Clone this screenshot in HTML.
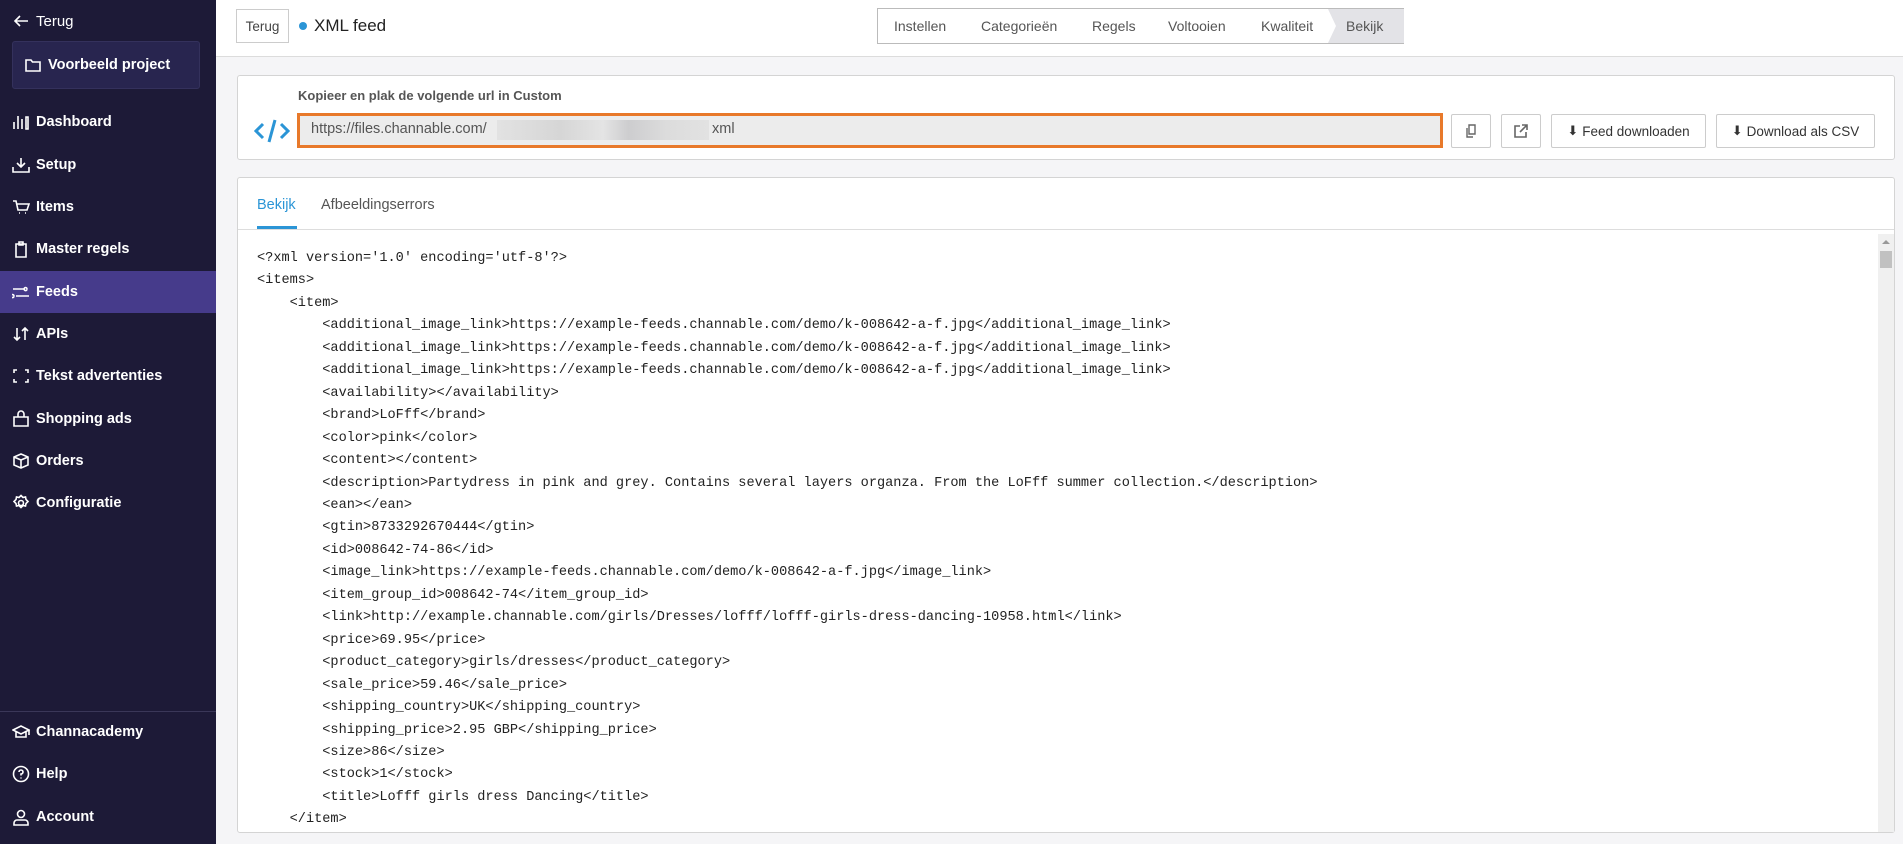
<!DOCTYPE html>
<html><head><meta charset="utf-8"><style>
*{box-sizing:border-box;margin:0;padding:0}
body{width:1903px;height:844px;overflow:hidden;background:#f5f5f7;font-family:"Liberation Sans",sans-serif;position:relative}
#sb{position:absolute;left:0;top:0;width:216px;height:844px;background:#1d1a37;color:#fff}
.ni{position:absolute;left:0;width:216px;height:42px;display:flex;align-items:center;font-size:14.5px;font-weight:bold;color:#fff}
.ni svg{position:absolute;left:12px;width:18px;height:18px;fill:none;stroke:#fff;stroke-width:1.6}
.ni span{position:absolute;left:36px;top:13px}
#top{position:absolute;left:216px;top:0;right:0;height:57px;background:#fff;border-bottom:1px solid #dcdcdc}
.card{position:absolute;left:237px;width:1658px;background:#fff;border:1px solid #d4d4d4;border-radius:3px}
.btn{position:absolute;top:114px;height:34px;background:#fff;border:1px solid #ccc;border-radius:2px;font-size:13.5px;color:#333;display:flex;align-items:center;justify-content:center}
#code{position:absolute;left:257px;top:248px;font-family:"Liberation Mono",monospace;font-size:13.6px;line-height:22.45px;color:#222;white-space:pre}
</style></head><body>
<div id="sb">
 <div class="ni" style="top:0;height:42px"><svg viewBox="0 0 18 18" style="left:12px"><path d="M16 9H3M8 4L3 9l5 5"/></svg><span style="font-weight:normal;font-size:15px">Terug</span></div>
 <div style="position:absolute;left:12px;top:41px;width:188px;height:48px;background:#28254f;border:1px solid #34315c;border-radius:3px"></div>
 <div class="ni" style="top:44px"><svg viewBox="0 0 18 18" style="left:24px"><path d="M2 4h5l1.5 2H16v9H2z"/></svg><span style="left:48px">Voorbeeld project</span></div>
 <div class="ni" style="top:101px"><svg viewBox="0 0 18 18"><path d="M2 16V9M6 16V3M10 16V6M14 16V4h2v12z"/></svg><span>Dashboard</span></div>
 <div class="ni" style="top:144px"><svg viewBox="0 0 18 18"><path d="M9 2v9M5 7l4 4 4-4M1 11v5h16v-5"/></svg><span>Setup</span></div>
 <div class="ni" style="top:186px"><svg viewBox="0 0 18 18"><path d="M1 3h3l2 9h9l2-6H5M7 15h1M13 15h1"/></svg><span>Items</span></div>
 <div class="ni" style="top:228px"><svg viewBox="0 0 18 18"><path d="M4 4h10v13H4zM7 2h4v3H7z"/></svg><span>Master regels</span></div>
 <div style="position:absolute;left:0;top:271px;width:216px;height:42px;background:#463b8b"></div>
 <div class="ni" style="top:271px"><svg viewBox="0 0 18 18"><path d="M1 6h12M15 6a1.5 1.5 0 1 0 0 .1M4 13h13M2 13a1.5 1.5 0 1 0 0 .1"/></svg><span>Feeds</span></div>
 <div class="ni" style="top:313px"><svg viewBox="0 0 18 18"><path d="M5 3v12M2 12l3 3 3-3M13 15V3M10 6l3-3 3 3"/></svg><span>APIs</span></div>
 <div class="ni" style="top:355px"><svg viewBox="0 0 18 18"><path d="M2 6V3h3M13 3h3v3M16 12v3h-3M5 15H2v-3"/></svg><span>Tekst advertenties</span></div>
 <div class="ni" style="top:398px"><svg viewBox="0 0 18 18"><path d="M2 7h14v9H2zM6 7V4a3 3 0 0 1 6 0v3"/></svg><span>Shopping ads</span></div>
 <div class="ni" style="top:440px"><svg viewBox="0 0 18 18"><path d="M9 2l7 3v8l-7 3-7-3V5zM2 5l7 3 7-3M9 8v8"/></svg><span>Orders</span></div>
 <div class="ni" style="top:482px"><svg viewBox="0 0 18 18"><circle cx="9" cy="9" r="2.5"/><path d="M9 1.5l2 2 2.5-.5.5 2.5 2 2-2 2-.5 2.5-2.5-.5-2 2-2-2-2.5.5-.5-2.5-2-2 2-2 .5-2.5 2.5.5z"/></svg><span>Configuratie</span></div>
 <div style="position:absolute;left:0;top:711px;width:216px;height:1px;background:#3a3758"></div>
 <div class="ni" style="top:711px"><svg viewBox="0 0 18 18"><path d="M1 7l8-4 8 4-8 4zM4 9v5h10V9M17 7v5"/></svg><span>Channacademy</span></div>
 <div class="ni" style="top:753px"><svg viewBox="0 0 18 18"><circle cx="9" cy="9" r="7.5"/><path d="M7 7a2 2 0 1 1 2 2v1.5M9 12.5v1"/></svg><span>Help</span></div>
 <div class="ni" style="top:796px"><svg viewBox="0 0 18 18"><circle cx="9" cy="6" r="3.5"/><path d="M2 17v-2a3 3 0 0 1 3-3h8a3 3 0 0 1 3 3v2z"/></svg><span>Account</span></div>
</div>

<div id="top"></div>
<div style="position:absolute;left:236px;top:9px;width:53px;height:34px;border:1px solid #ccc;background:#fff;font-size:13.5px;color:#444;display:flex;align-items:center;justify-content:center">Terug</div>
<div style="position:absolute;left:299px;top:22px;width:8px;height:8px;border-radius:50%;background:#2b95d6"></div>
<div style="position:absolute;left:314px;top:16px;font-size:17px;color:#222">XML feed</div>
<div style="position:absolute;left:877px;top:8px;width:527px;height:36px;border:1px solid #bbb;background:#fff;font-size:14px;color:#555">
 <span style="position:absolute;left:16px;top:9px">Instellen</span>
 <span style="position:absolute;left:103px;top:9px">Categorieën</span>
 <span style="position:absolute;left:214px;top:9px">Regels</span>
 <span style="position:absolute;left:290px;top:9px">Voltooien</span>
 <span style="position:absolute;left:383px;top:9px">Kwaliteit</span>
 <div style="position:absolute;left:450px;top:0;width:76px;height:34px;background:#e3e3e7;clip-path:polygon(0 0,100% 0,100% 100%,0 100%,8px 50%)"></div>
 <span style="position:absolute;left:468px;top:9px">Bekijk</span>
</div>

<div class="card" style="top:75px;height:85px"></div>
<div style="position:absolute;left:298px;top:88px;font-size:13px;color:#555;font-weight:bold">Kopieer en plak de volgende url in Custom</div>
<svg style="position:absolute;left:254px;top:117px" width="36" height="28" viewBox="0 0 36 28" fill="none" stroke="#2b95d6" stroke-width="3"><path d="M9 7L2 14l7 7M27 7l7 7-7 7M21 3l-6 22"/></svg>
<div style="position:absolute;left:297px;top:113px;width:1146px;height:35px;background:#ececec;border:3px solid #e8792a"></div>
<div style="position:absolute;left:311px;top:121px;font-size:14.5px;color:#555">https://files.channable.com/</div>
<div style="position:absolute;left:497px;top:120px;width:212px;height:20px;background:linear-gradient(90deg,#e2e2e2,#d6d6d6 30%,#e4e4e4 50%,#cdcdcf 62%,#dcdcdc 80%,#e2e2e2)"></div>
<div style="position:absolute;left:712px;top:121px;font-size:14.5px;color:#555">xml</div>
<div class="btn" style="left:1451px;width:40px"><svg width="16" height="16" viewBox="0 0 16 16" fill="none" stroke="#666" stroke-width="1.4"><path d="M6 2h6v9H6zM4 5v9h6"/></svg></div>
<div class="btn" style="left:1501px;width:40px"><svg width="16" height="16" viewBox="0 0 16 16" fill="none" stroke="#666" stroke-width="1.6"><path d="M7 3H2v11h11V9M9 2h5v5M14 2L7 9"/></svg></div>
<div class="btn" style="left:1551px;width:155px"><span style="font-size:13px;margin-right:4px">⬇</span>Feed downloaden</div>
<div class="btn" style="left:1716px;width:159px"><span style="font-size:13px;margin-right:4px">⬇</span>Download als CSV</div>

<div class="card" style="top:177px;height:656px"></div>
<div style="position:absolute;left:238px;top:229px;width:1656px;height:1px;background:#ddd"></div>
<div style="position:absolute;left:257px;top:197px;font-size:14.5px;color:#2b95d6">Bekijk</div>
<div style="position:absolute;left:257px;top:226px;width:40px;height:3px;background:#2b95d6"></div>
<div style="position:absolute;left:321px;top:197px;font-size:14.5px;color:#555">Afbeeldingserrors</div>
<div style="position:absolute;left:1878px;top:234px;width:16px;height:598px;background:#f0f0f0"></div>
<div style="position:absolute;left:1880px;top:251px;width:12px;height:17px;background:#c1c1c1"></div>
<div style="position:absolute;left:1882px;top:240px;width:0;height:0;border-left:4px solid transparent;border-right:4px solid transparent;border-bottom:4px solid #999"></div>
<div id="code">&lt;?xml version='1.0' encoding='utf-8'?&gt;
&lt;items&gt;
    &lt;item&gt;
        &lt;additional_image_link&gt;https://example-feeds.channable.com/demo/k-008642-a-f.jpg&lt;/additional_image_link&gt;
        &lt;additional_image_link&gt;https://example-feeds.channable.com/demo/k-008642-a-f.jpg&lt;/additional_image_link&gt;
        &lt;additional_image_link&gt;https://example-feeds.channable.com/demo/k-008642-a-f.jpg&lt;/additional_image_link&gt;
        &lt;availability&gt;&lt;/availability&gt;
        &lt;brand&gt;LoFff&lt;/brand&gt;
        &lt;color&gt;pink&lt;/color&gt;
        &lt;content&gt;&lt;/content&gt;
        &lt;description&gt;Partydress in pink and grey. Contains several layers organza. From the LoFff summer collection.&lt;/description&gt;
        &lt;ean&gt;&lt;/ean&gt;
        &lt;gtin&gt;8733292670444&lt;/gtin&gt;
        &lt;id&gt;008642-74-86&lt;/id&gt;
        &lt;image_link&gt;https://example-feeds.channable.com/demo/k-008642-a-f.jpg&lt;/image_link&gt;
        &lt;item_group_id&gt;008642-74&lt;/item_group_id&gt;
        &lt;link&gt;http://example.channable.com/girls/Dresses/lofff/lofff-girls-dress-dancing-10958.html&lt;/link&gt;
        &lt;price&gt;69.95&lt;/price&gt;
        &lt;product_category&gt;girls/dresses&lt;/product_category&gt;
        &lt;sale_price&gt;59.46&lt;/sale_price&gt;
        &lt;shipping_country&gt;UK&lt;/shipping_country&gt;
        &lt;shipping_price&gt;2.95 GBP&lt;/shipping_price&gt;
        &lt;size&gt;86&lt;/size&gt;
        &lt;stock&gt;1&lt;/stock&gt;
        &lt;title&gt;Lofff girls dress Dancing&lt;/title&gt;
    &lt;/item&gt;</div>
</body></html>
